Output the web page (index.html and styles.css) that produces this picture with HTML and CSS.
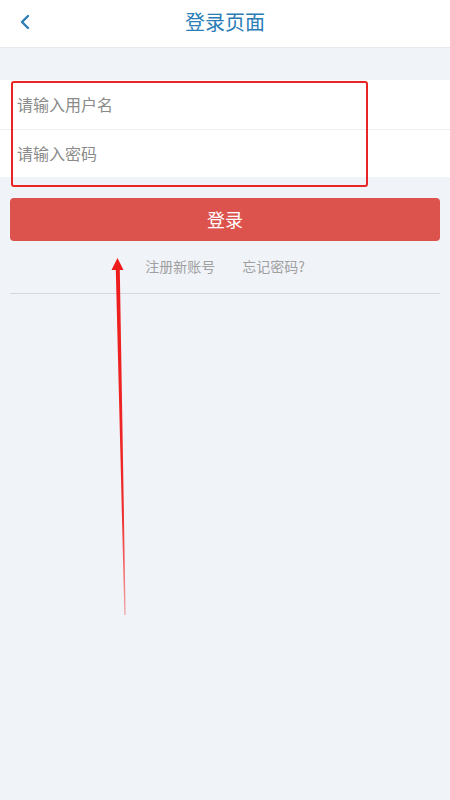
FILE: index.html
```html
<!DOCTYPE html>
<html lang="zh">
<head>
<meta charset="utf-8">
<title>登录页面</title>
<link rel="stylesheet" href="styles.css">
</head>
<body>
<div class="page">
  <header class="topbar">
    <span class="back">
      <svg width="12" height="16" viewBox="0 0 12 16"><path d="M9 2 L3 8 L9 14" fill="none" stroke="#2a7db5" stroke-width="2.4" stroke-linecap="round" stroke-linejoin="round"/></svg>
    </span>
    <h1 class="title">登录页面</h1>
  </header>
  <main class="content">
    <div class="form">
      <div class="field">请输入用户名</div>
      <div class="field">请输入密码</div>
    </div>
    <button class="login">登录</button>
    <div class="links">
      <span>注册新账号</span>
      <span>忘记密码?</span>
    </div>
    <hr class="divider">
  </main>
  <div class="mark-box"></div>
  <svg class="mark-arrow" width="450" height="800" viewBox="0 0 450 800">
    <defs>
      <linearGradient id="g" x1="0" y1="0" x2="0" y2="1">
        <stop offset="0" stop-color="#ee1c1c"/>
        <stop offset="0.7" stop-color="#ee2a2a"/>
        <stop offset="1" stop-color="#f5a0a0"/>
      </linearGradient>
    </defs>
    <path d="M115.8 270 L119.8 270 L125.6 615 L124.4 615 Z" fill="url(#g)"/>
    <path d="M117.5 258 L123.5 270 L111.5 270 Z" fill="#ee1c1c"/>
  </svg>
</div>
</body>
</html>
```
FILE: styles.css
```css
* { box-sizing: border-box; }
html, body { margin: 0; padding: 0; }
body {
  font-family: "Noto Sans CJK SC", "Noto Sans", sans-serif;
  background: #f0f3f8;
}
.page {
  position: relative;
  width: 450px;
  height: 800px;
  overflow: hidden;
  background: #f0f3f8;
}
.topbar {
  height: 48px;
  background: #fff;
  border-bottom: 1px solid #e6e9ee;
  display: flex;
  align-items: center;
  justify-content: center;
  position: relative;
}
.back {
  position: absolute;
  left: 19px;
  top: 14px;
  display: flex;
}
.title {
  margin: 0;
  font-size: 20px;
  font-weight: 400;
  color: #2a7db5;
  line-height: 1;
  margin-top: -3px;
}
.content {
  padding: 32px 10px 0;
  display: flex;
  flex-direction: column;
}
.form {
  margin: 0 -10px;
  background: #fff;
  display: flex;
  flex-direction: column;
}
.field {
  height: 48.5px;
  padding-left: 17px;
  display: flex;
  align-items: center;
  font-size: 16px;
  color: #8a8a8a;
}
.field + .field { border-top: 1px solid #eceef1; }
.login {
  margin-top: 21px;
  height: 43px;
  border: none;
  border-radius: 4px;
  background: #dc524d;
  color: #fff;
  font-family: inherit;
  font-size: 18px;
  padding: 0 0 2px;
}
.links {
  display: flex;
  justify-content: center;
  gap: 27px;
  margin-top: 15px;
  font-size: 14px;
  color: #a0a0a0;
  line-height: 20px;
}
.divider {
  margin: 17px 0 0;
  border: none;
  border-top: 1px solid #d6d8dc;
}
.mark-box {
  position: absolute;
  left: 11px;
  top: 81px;
  width: 357px;
  height: 106px;
  border: 2px solid #e82424;
  border-radius: 3px;
}
.mark-arrow {
  position: absolute;
  left: 0;
  top: 0;
  pointer-events: none;
}
```
